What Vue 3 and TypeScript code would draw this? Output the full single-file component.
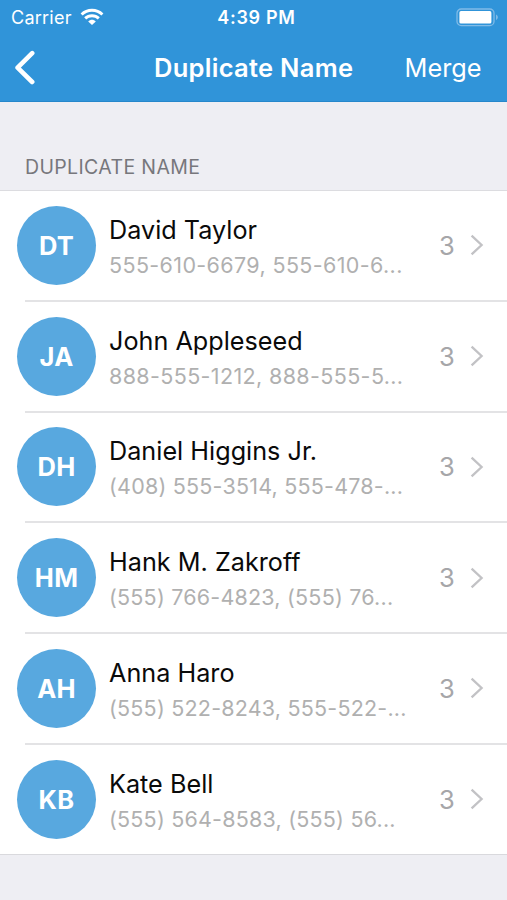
<script setup lang="ts">
interface Contact {
  initials: string
  name: string
  phones: string
  count: number
}

const contacts: Contact[] = [
  { initials: 'DT', name: 'David Taylor', phones: '555-610-6679, 555-610-6...', count: 3 },
  { initials: 'JA', name: 'John Appleseed', phones: '888-555-1212, 888-555-5...', count: 3 },
  { initials: 'DH', name: 'Daniel Higgins Jr.', phones: '(408) 555-3514, 555-478-...', count: 3 },
  { initials: 'HM', name: 'Hank M. Zakroff', phones: '(555) 766-4823, (555) 76...', count: 3 },
  { initials: 'AH', name: 'Anna Haro', phones: '(555) 522-8243, 555-522-...', count: 3 },
  { initials: 'KB', name: 'Kate Bell', phones: '(555) 564-8583, (555) 56...', count: 3 },
]
</script>

<template>
  <div class="screen">
    <header class="top">
      <div class="status">
        <div class="carrier">
          <span>Carrier</span>
          <svg class="wifi" width="24" height="18" viewBox="0 0 24 18" fill="none" stroke="#fff" stroke-width="2.9">
            <path d="M1.6 6.5C7.3 .9 16.7 .9 22.4 6.5" />
            <path d="M5.2 10.4C8.9 6.8 15.1 6.8 18.8 10.4" />
            <path d="M12 17L8.2 13.4C10.4 11.3 13.6 11.3 15.8 13.4Z" fill="#fff" stroke="none" />
          </svg>
        </div>
        <span class="time">4:39 PM</span>
        <svg class="battery" width="43" height="19" viewBox="0 0 43 19">
          <rect x="1" y="1" width="37" height="16.6" rx="4.2" fill="none" stroke="#80bbe7" stroke-width="1.3" />
          <rect x="3.4" y="3.1" width="32" height="12.4" rx="1.6" fill="#fff" />
          <path d="M40 6.6C42.5 7.6 42.5 11 40 12Z" fill="#80bbe7" />
        </svg>
      </div>
      <nav class="nav">
        <svg class="back" width="22" height="36" viewBox="0 0 22 36" fill="none" stroke="#fff" stroke-width="4.6" stroke-linecap="round" stroke-linejoin="round">
          <path d="M17.2 3.2L2.6 17.7L17.2 32" />
        </svg>
        <h1 class="title">Duplicate Name</h1>
        <span class="merge">Merge</span>
      </nav>
    </header>
    <h2 class="section">DUPLICATE NAME</h2>
    <ul class="list">
      <li v-for="contact in contacts" :key="contact.initials" class="row">
        <span class="avatar">{{ contact.initials }}</span>
        <div class="info">
          <div class="name">{{ contact.name }}</div>
          <div class="phones" :class="{ area: contact.phones.startsWith('(') }">{{ contact.phones }}</div>
        </div>
        <span class="count">{{ contact.count }}</span>
        <svg class="chevron" width="14" height="22" viewBox="0 0 14 22" fill="none" stroke="#c2c2c5" stroke-width="2.3">
          <path d="M1.6 1.6L11.6 11L1.6 20.4" />
        </svg>
      </li>
    </ul>
  </div>
</template>

<style>
body {
  background: #eeeef3;
}
</style>

<style scoped>
.screen {
  width: 507px;
  height: 900px;
  overflow: hidden;
  background: #eeeef3;
  font-family: Inter, 'Liberation Sans', sans-serif;
  white-space: nowrap;
}
.top {
  box-sizing: border-box;
  height: 102px;
  background: #3094d9;
  border-bottom: 1px solid #2687cb;
  color: #fff;
}
.status {
  display: grid;
  grid-template-columns: 1fr auto 1fr;
  align-items: center;
  height: 34px;
  padding: 0 8px 0 11px;
}
.carrier {
  display: flex;
  align-items: center;
  gap: 8px;
  font-size: 18px;
  letter-spacing: 0.25px;
}
.time {
  padding-left: 3px;
  font-size: 18px;
  font-weight: 600;
  letter-spacing: 0.7px;
}
.battery {
  justify-self: end;
}
.nav {
  display: grid;
  grid-template-columns: 139px 1fr auto;
  align-items: center;
  height: 67px;
  padding: 0 25.5px 0 15px;
}
.title {
  margin: 0;
  font-size: 25.5px;
  font-weight: 600;
  letter-spacing: 0.28px;
}
.merge {
  font-size: 25.3px;
}
.section {
  box-sizing: border-box;
  height: 88px;
  margin: 0;
  padding: 53px 25px 0;
  font-size: 19.5px;
  font-weight: 400;
  line-height: 24px;
  letter-spacing: 0.36px;
  color: #77777c;
}
.list {
  margin: 0;
  padding: 0;
  list-style: none;
  background: #fff;
  border-top: 1px solid #dcdce0;
  border-bottom: 1px solid #d9d9dd;
}
.row {
  display: grid;
  grid-template-columns: 79px 1fr 16px 29px;
  align-items: center;
  height: 110.75px;
  padding: 0 23px 2px 17px;
  background: linear-gradient(#e3e3e5, #e3e3e5) 25px 100% / 100% 2px no-repeat;
  box-sizing: border-box;
}
.row:last-child {
  background: none;
  height: 109.25px;
  padding-bottom: 0.5px;
}
.avatar {
  display: flex;
  align-items: center;
  justify-content: center;
  width: 79px;
  height: 79px;
  border-radius: 50%;
  background: #58a8df;
  color: #fff;
  font-size: 25.5px;
  font-weight: 700;
  letter-spacing: 0.3px;
}
.info {
  padding: 4px 0 0 13px;
}
.name {
  font-size: 25.2px;
  line-height: 35px;
  letter-spacing: 0.02px;
  color: #0a0a0a;
}
.phones {
  font-size: 21.5px;
  line-height: 34px;
  letter-spacing: 0.37px;
  color: #b0b0b0;
}
.phones.area {
  letter-spacing: 0.21px;
}
.count {
  font-size: 25.5px;
  color: #a6a6a9;
}
.chevron {
  justify-self: end;
}
</style>
